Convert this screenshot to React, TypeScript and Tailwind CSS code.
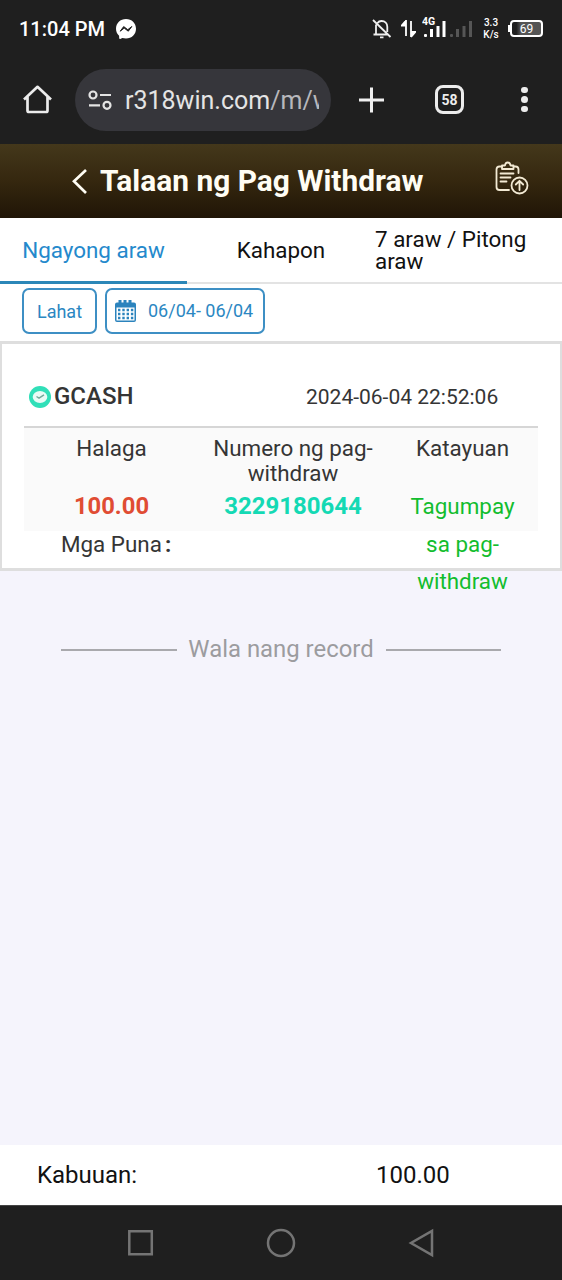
import React, { useState } from "react";

const StatusBar = () => {
  return (
    <div className="flex h-[57px] items-center bg-[#1f1f1f] pl-[19px] text-white">
      <span className="w-[97px] whitespace-nowrap text-[20px] font-medium leading-none">
        11:04 PM
      </span>
      <svg width="20" height="20" viewBox="0 0 20 20">
        <path
          d="M10 0C4.300 0 0 4.200 0 9.700c0 2.900 1.200 5.300 3.100 7l.1 2.500c0 .6.600.9 1.100.7l2-.9c1.100.3 2.400.5 3.700.5 5.700 0 10-4.200 10-9.800S15.700 0 10 0z"
          fill="#fff"
        />
        <path
          d="M4.200 12.200 7.700 7.600l4.100 3.100 4-3.200-3.500 4.700-4.100-3.100z"
          fill="#1f1f1f"
          stroke="#1f1f1f"
          strokeWidth="1"
          strokeLinejoin="round"
        />
      </svg>
      <svg
        className="ml-[236px]"
        width="20"
        height="20"
        viewBox="0 0 20 20"
        fill="none"
        stroke="#f0f0f0"
        strokeWidth="1.8"
      >
        <path d="M1 1 18.500 18M4 5.500v9.500M1.500 15.500h14M5.500 4C6.500 2.500 8 2 9.500 2c3.500 0 5.800 2.400 5.800 5.800V13M8 18.300h3.500" />
      </svg>
      <svg className="ml-[9px]" width="15" height="20" viewBox="0 0 15 20">
        <path
          d="M5 1v16M5 1.500.800 6.500H5M10 2v16M10 18l4.200-5H10"
          fill="#fff"
          stroke="#fff"
          strokeWidth="1.800"
        />
      </svg>
      <svg className="ml-[6px]" width="54" height="26" viewBox="0 0 54 26">
        <g fill="#fff">
          <rect x="2" y="18" width="3" height="3" rx="1" />
          <rect x="8" y="13" width="3" height="8" />
          <rect x="14.500" y="10" width="3" height="11" />
          <rect x="20.500" y="5" width="3" height="16" />
          <text
            x="0"
            y="9"
            fontFamily="Roboto, sans-serif"
            fontSize="10.500"
            fontWeight="700"
          >
            4G
          </text>
        </g>
        <g fill="#565656">
          <rect x="28" y="18" width="3" height="3" rx="1" />
          <rect x="34" y="13" width="3" height="8" />
          <rect x="40.500" y="10" width="3" height="11" />
          <rect x="47" y="5" width="3" height="16" />
        </g>
      </svg>
      <div className="ml-[4px] w-[22px] text-center text-[10px] font-medium leading-[12px]">
        <p>3.3</p>
        <p>K/s</p>
      </div>
      <div className="ml-[6px] flex items-center">
        <span className="h-[7px] w-[2px] bg-white"></span>
        <span className="flex h-[17px] w-[33px] items-center justify-center rounded-[4px] border-2 border-white bg-linear-to-r from-[#1f1f1f] from-15% via-[#555] via-30% to-[#555] text-[12px] leading-none">
          69
        </span>
      </div>
    </div>
  );
};

const BrowserBar = () => {
  return (
    <div className="flex h-[87px] items-center bg-[#1f1f1f] pb-[2px] pl-[23px]">
      <svg
        width="29"
        height="29"
        viewBox="0 0 29 29"
        fill="none"
        stroke="#ececec"
        strokeWidth="2.700"
        strokeLinejoin="round"
      >
        <path d="M1 14.500 14.500 1.800 28 14.500M4.500 12v13.500q0 1.500 1.500 1.500h17q1.500 0 1.500-1.500V12" />
      </svg>
      <div className="ml-[23px] flex h-[62px] w-[256px] items-center rounded-full bg-[#36363b] pl-[13px]">
        <svg
          width="24"
          height="20"
          viewBox="0 0 24 20"
          fill="none"
          stroke="#e4e4e4"
          strokeWidth="2.200"
        >
          <circle cx="5" cy="5" r="3.500" />
          <path d="M12 5h11M1 15.300h11" />
          <circle cx="19" cy="15.300" r="3.500" />
        </svg>
        <p className="ml-[13px] mt-[3px] w-[194px] overflow-hidden whitespace-nowrap text-[25px] leading-[32px] text-[#e4e4e4]">
          r318win.com<span className="text-[#b8b8bc]">/m/w</span>
        </p>
      </div>
      <svg
        className="ml-[28px]"
        width="25"
        height="26"
        viewBox="0 0 25 26"
        stroke="#f0f0f0"
        strokeWidth="3"
      >
        <path d="M0 13h25M12.500 .5v25" />
      </svg>
      <div className="ml-[51px] flex h-[29px] w-[29px] items-center justify-center rounded-[8px] border-[3px] border-[#ececec] text-[14px] font-bold leading-none text-[#ececec]">
        58
      </div>
      <div className="ml-[57px] flex flex-col gap-[3px]">
        <span className="h-[6.500px] w-[6.500px] rounded-full bg-[#ececec]"></span>
        <span className="h-[6.500px] w-[6.500px] rounded-full bg-[#ececec]"></span>
        <span className="h-[6.500px] w-[6.500px] rounded-full bg-[#ececec]"></span>
      </div>
    </div>
  );
};

const Header = () => {
  return (
    <div className="flex h-[74px] items-center bg-linear-to-b from-[#44381b] via-[#35270f] to-[#201507] pl-[72px]">
      <svg
        width="16"
        height="26"
        viewBox="0 0 16 26"
        fill="none"
        stroke="#fffdf4"
        strokeWidth="2.700"
      >
        <path d="M14 2 2 13.300 14 25" />
      </svg>
      <h1 className="ml-[12px] w-[395px] whitespace-nowrap text-[29.900px] font-bold leading-none text-[#fffdf4]">
        Talaan ng Pag Withdraw
      </h1>
      <svg
        className="-mt-[6px]"
        width="34"
        height="34"
        viewBox="0 0 34 34"
        fill="none"
        stroke="#f3ead4"
        strokeWidth="1.800"
        strokeLinecap="round"
        strokeLinejoin="round"
      >
        <path d="M7 5.500H4.500Q1.500 5.500 1.500 8.500V26Q1.500 29 4.500 29H14M18.500 5.500H20.500Q23.500 5.500 23.500 8.500V12" />
        <path d="M7 8V4.500H10Q10.300 1.500 12.700 1.500T15.500 4.500H18.500V8Z" />
        <path d="M5.500 12.500h13M5.500 16.500h10M5.500 20.500h6" />
        <circle cx="24.500" cy="24.500" r="8" />
        <path d="M24.500 29v-9M20.800 23.500l3.700-3.700 3.700 3.700" />
      </svg>
    </div>
  );
};

const Tabs = () => {
  const [tab, setTab] = useState<number>(0);
  const list = ["Ngayong araw", "Kahapon", "7 araw / Pitong araw"];
  return (
    <div className="grid h-[66px] grid-cols-[187px_188px_187px] border-b-2 border-[#e3e3e3] bg-white">
      {list.map((p, index) => (
        <button
          key={p}
          onClick={() => setTab(index)}
          className={`-mb-[2px] flex items-center border-b-[3px] text-[22.400px] leading-[22px] ${
            index === 2 ? "text-left" : "justify-center"
          } ${
            tab === index
              ? "border-[#2b87b8] text-[#2489cc]"
              : "border-transparent text-[#111]"
          }`}
        >
          {index === 2 ? <span className="w-[171px]">{p}</span> : p}
        </button>
      ))}
    </div>
  );
};

const Filters = () => {
  return (
    <div className="flex h-[57px] gap-[8px] bg-white pl-[22px] pt-[4px] text-[18px] text-[#2b87c2]">
      <button className="h-[46px] w-[75px] rounded-[7px] border-2 border-[#3d8fc4]">
        Lahat
      </button>
      <button className="flex h-[46px] w-[160px] items-center rounded-[7px] border-2 border-[#3d8fc4] pl-[8px]">
        <svg width="21" height="22" viewBox="0 0 21 22">
          <path
            d="M2 2.500h1.500V0h3v2.500h2V0h3v2.500h2V0h3v2.500H19q2 0 2 2V20q0 2-2 2H2q-2 0-2-2V4.500q0-2 2-2z"
            fill="#2b83bd"
          />
          <path d="M1.500 7.500h18v13h-18z" fill="#fff" />
          <path
            d="M3 10h15.500M3 14h15.500M3 18h15.500"
            stroke="#2b83bd"
            strokeWidth="2.400"
            strokeDasharray="2.400 1.900"
          />
        </svg>
        <span className="-mt-[2px] ml-[12px] whitespace-nowrap">
          06/04- 06/04
        </span>
      </button>
    </div>
  );
};

const RecordCard = () => {
  return (
    <div className="h-[230px] border-x-2 border-b-[3px] border-t-[3px] border-[#dedede] bg-white px-[22px] text-[22.400px] text-[#353535]">
      <div className="flex h-[84px] items-center border-b-2 border-[#d6d6d6] pl-[5px] pt-[24px]">
        <svg width="22" height="22" viewBox="0 0 22 22">
          <circle cx="11" cy="11" r="11" fill="#30dfb8" />
          <ellipse cx="11" cy="11" rx="7.300" ry="6" fill="#e9fbf6" />
          <path
            d="m7.500 10.500 2.500 1.700 5-3.400"
            fill="none"
            stroke="#72a99a"
            strokeWidth="1.400"
          />
        </svg>
        <b className="-mt-[2px] ml-[3px] w-[252px] text-[24px] font-medium">
          GCASH
        </b>
        <span className="mt-[1px] whitespace-nowrap text-[21px]">
          2024-06-04 22:52:06
        </span>
      </div>
      <div className="grid h-[103px] grid-cols-[175px_188px_151px] bg-[#fafafa] pt-[8px] text-center leading-[25px]">
        <div>
          <p className="h-[52px]">Halaga</p>
          <p className="text-[23.800px] font-bold leading-[37px] text-[#e04c33]">
            100.00
          </p>
        </div>
        <div>
          <p className="h-[52px]">
            Numero ng pag-
            <br />
            withdraw
          </p>
          <p className="text-[24px] font-bold leading-[37px] text-[#14d9b4]">
            3229180644
          </p>
        </div>
        <div>
          <p className="h-[52px]">Katayuan</p>
          <p className="leading-[37.500px] text-[#12bd2e]">
            Tagumpay
            <br />
            sa pag-
            <br />
            withdraw
          </p>
        </div>
      </div>
      <p className="pl-[37px] leading-[26px]">
        Mga Puna<span className="ml-[3px] font-bold">:</span>
      </p>
    </div>
  );
};

const App = () => {
  return (
    <div
      className="flex h-[1280px] w-[562px] flex-col overflow-hidden bg-[#f5f4fc]"
      style={{ fontFamily: "Roboto, sans-serif" }}
    >
      <StatusBar />
      <BrowserBar />
      <Header />
      <Tabs />
      <Filters />
      <RecordCard />
      <div className="flex flex-1 items-start">
        <div className="mt-[61px] flex w-full items-center px-[61px] text-[23.900px] leading-[34px] text-[#9c9c9f]">
          <span className="mt-[1px] h-[2px] flex-1 bg-[#a9a9ad]"></span>
          <span className="w-[209px] whitespace-nowrap text-center">
            Wala nang record
          </span>
          <span className="mt-[1px] h-[2px] flex-1 bg-[#a9a9ad]"></span>
        </div>
      </div>
      <div className="flex h-[60px] items-center bg-white pl-[37px] text-[24px] text-[#111]">
        <span className="w-[339px]">Kabuuan:</span>
        <span>100.00</span>
      </div>
      <div className="flex h-[75px] items-center border-t border-[#444] bg-[#1f1f1f] pl-[128px]">
        <svg
          width="310"
          height="30"
          viewBox="0 0 310 30"
          fill="none"
          stroke="#747474"
          strokeWidth="2.500"
        >
          <path d="M1.300 3.300h22.500v23H1.300z" />
          <circle cx="153" cy="15" r="13" />
          <path d="M304 3v24l-21-12z" />
        </svg>
      </div>
    </div>
  );
};

export default App;
